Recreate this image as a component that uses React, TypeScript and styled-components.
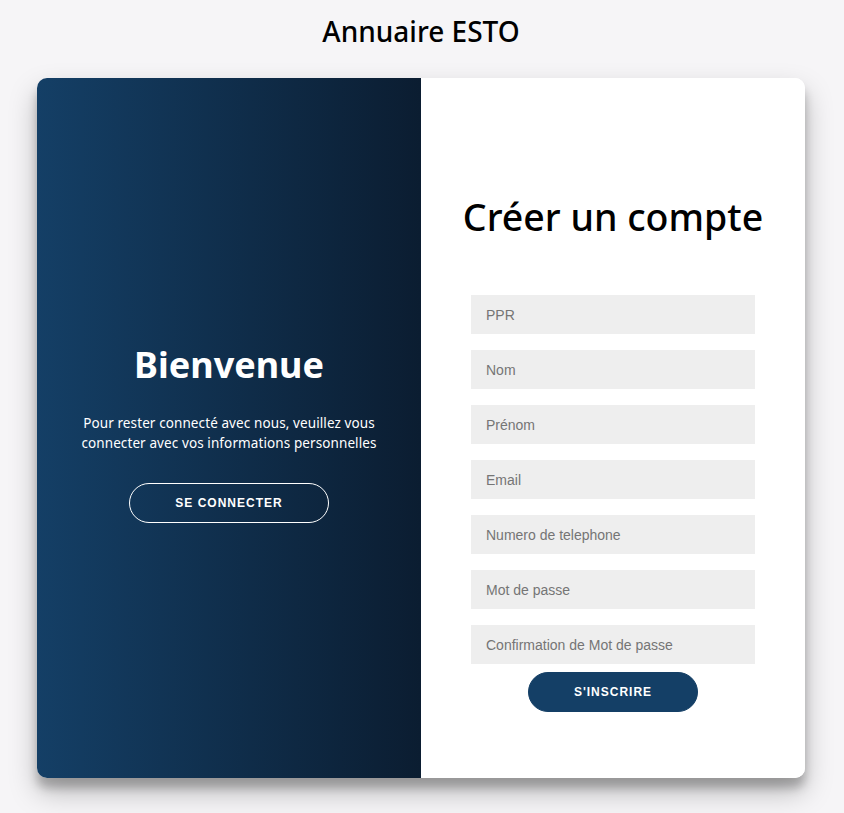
import styled, { createGlobalStyle } from "styled-components"

const GlobalStyle = createGlobalStyle`
  * {
    box-sizing: border-box;
  }

  body {
    margin: 0;
    background: #f6f5f7;
    font-family: "Noto Sans", "Open Sans", sans-serif;
  }
`

const fields = [
  { name: "ppr", type: "text", placeholder: "PPR" },
  { name: "nom", type: "text", placeholder: "Nom" },
  { name: "prenom", type: "text", placeholder: "Prénom" },
  { name: "email", type: "email", placeholder: "Email" },
  { name: "tel", type: "tel", placeholder: "Numero de telephone" },
  { name: "password", type: "password", placeholder: "Mot de passe" },
  { name: "confirm", type: "password", placeholder: "Confirmation de Mot de passe" },
]

export default function App() {
  function handleSubmit(event: React.FormEvent<HTMLFormElement>) {
    event.preventDefault()
  }

  return (
    <Page>
      <GlobalStyle />
      <PageTitle>Annuaire ESTO</PageTitle>

      <Card>
        <WelcomePanel>
          <WelcomeTitle>Bienvenue</WelcomeTitle>
          <WelcomeText>
            Pour rester connecté avec nous, veuillez vous connecter avec vos
            informations personnelles
          </WelcomeText>
          <GhostButton type="button">Se connecter</GhostButton>
        </WelcomePanel>

        <SignUpPanel>
          <SignUpForm onSubmit={handleSubmit}>
            <FormTitle>Créer un compte</FormTitle>
            <Fields>
              {fields.map((field) => (
                <Field
                  key={field.name}
                  name={field.name}
                  type={field.type}
                  placeholder={field.placeholder}
                />
              ))}
            </Fields>
            <SubmitButton type="submit">S'inscrire</SubmitButton>
          </SignUpForm>
        </SignUpPanel>
      </Card>
    </Page>
  )
}

const Page = styled.div`
  min-height: 100vh;
  padding-right: 2px;
  display: flex;
  flex-direction: column;
  align-items: center;
`

const PageTitle = styled.h1`
  margin: 15px 0 31px;
  font-size: 28px;
  line-height: 32px;
  font-weight: 500;
  color: #000;
`

const Card = styled.div`
  width: 768px;
  height: 700px;
  display: grid;
  grid-template-columns: repeat(2, minmax(0, 1fr));
  border-radius: 10px;
  overflow: hidden;
  background: #fff;
  box-shadow: 0 14px 28px rgba(0, 0, 0, 0.25), 0 10px 10px rgba(0, 0, 0, 0.22);
`

const WelcomePanel = styled.div`
  display: flex;
  flex-direction: column;
  align-items: center;
  justify-content: center;
  padding: 10px 40px 0;
  text-align: center;
  color: #fff;
  background: linear-gradient(to right, #143f66, #0b1d31);
`

const WelcomeTitle = styled.h1`
  margin: 0 0 26px;
  font-size: 36px;
  line-height: 44px;
  font-weight: 700;
`

const WelcomeText = styled.p`
  margin: 0 0 30px;
  font-size: 13.5px;
  line-height: 20px;
  letter-spacing: 0.1px;
`

const PillButton = styled.button`
  height: 40px;
  padding: 0 45px;
  border-radius: 20px;
  font-family: "Liberation Sans", Arial, sans-serif;
  font-size: 12px;
  font-weight: 700;
  letter-spacing: 1px;
  text-transform: uppercase;
  color: #fff;
  cursor: pointer;
`

const GhostButton = styled(PillButton)`
  border: 1px solid #fff;
  background: transparent;
`

const SubmitButton = styled(PillButton)`
  margin-top: 8px;
  border: 1px solid #143f66;
  background: #143f66;
`

const SignUpPanel = styled.div`
  display: flex;
  align-items: center;
  justify-content: center;
  padding: 49px 50px 0;
  background: #fff;
`

const SignUpForm = styled.form`
  width: 100%;
  display: flex;
  flex-direction: column;
  align-items: center;
`

const FormTitle = styled.h1`
  margin: 0 0 54px;
  font-size: 37.5px;
  line-height: 48px;
  font-weight: 500;
  white-space: nowrap;
  color: #000;
`

const Fields = styled.div`
  width: 100%;
  display: flex;
  flex-direction: column;
  gap: 16px;
`

const Field = styled.input`
  width: 100%;
  height: 39px;
  padding: 0 15px;
  border: none;
  outline: none;
  background: #eee;
  font-family: "Liberation Sans", Arial, sans-serif;
  font-size: 14px;
  color: #333;

  &::placeholder {
    color: #757575;
  }
`
